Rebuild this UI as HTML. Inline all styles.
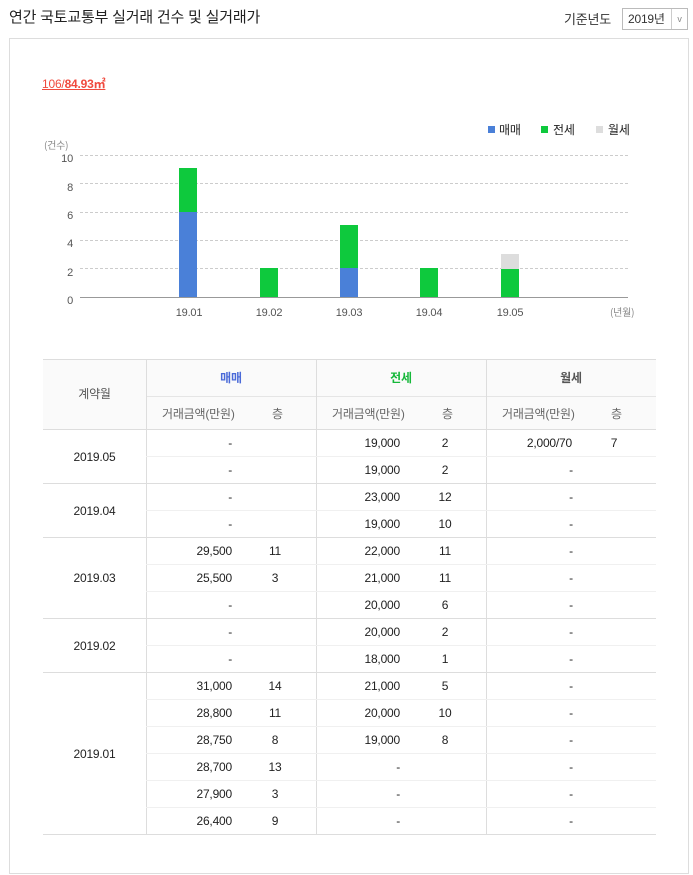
<!DOCTYPE html>
<html><head><meta charset="utf-8"><style>
*{margin:0;padding:0;box-sizing:border-box}
body{width:693px;height:875px;background:#fff;font-family:"Liberation Sans","Noto Sans CJK KR","NanumGothic",sans-serif;color:#222;position:relative;overflow:hidden;letter-spacing:-0.2px}
.a{position:absolute;white-space:nowrap}
.t{font-size:12px;line-height:27px;height:27px}
.r{text-align:right}
.c{text-align:center}
.hl{position:absolute;height:1px}
.vl{position:absolute;width:1px;background:#ddd}
</style></head><body>
<div class="a" style="left:9px;top:6px;font-size:15px;color:#222">연간 국토교통부 실거래 건수 및 실거래가</div>
<div class="a" style="left:564px;top:9px;font-size:13px;color:#333">기준년도</div>
<div class="a" style="left:622px;top:8px;width:66px;height:22px;border:1px solid #bbb;font-size:12px;line-height:20px;padding-left:5px;color:#333">2019년<span style="position:absolute;right:0;top:0;width:16px;height:20px;border-left:1px solid #ccc;text-align:center;font-size:9px;color:#888">v</span></div>
<div class="a" style="left:9px;top:38px;width:680px;height:836px;border:1px solid #ddd"></div>
<div class="a" style="left:42px;top:75px;font-size:12px;color:#f04a3e;text-decoration:underline">106/<b>84.93㎡</b></div>

<svg class="a" style="left:0;top:0" width="693" height="330">
<g stroke="#ccc" stroke-dasharray="3,2"><line x1="80" y1="155.5" x2="628" y2="155.5"/><line x1="80" y1="183.5" x2="628" y2="183.5"/><line x1="80" y1="212.5" x2="628" y2="212.5"/><line x1="80" y1="240.5" x2="628" y2="240.5"/><line x1="80" y1="268.5" x2="628" y2="268.5"/></g>
<line x1="80" y1="297.5" x2="628" y2="297.5" stroke="#999"/>
<g font-size="11" fill="#555" font-family="Liberation Sans,sans-serif" text-anchor="end">
<text x="73" y="162">10</text><text x="73" y="191">8</text><text x="73" y="219">6</text><text x="73" y="247">4</text><text x="73" y="276">2</text><text x="73" y="304">0</text></g>
<text x="44" y="149" font-size="10" fill="#888" font-family="Noto Sans CJK KR,sans-serif">(건수)</text>
<rect x="179" y="212" width="18" height="85" fill="#4a80d8"/><rect x="179" y="168" width="18" height="44" fill="#0ec93d"/>
<rect x="260" y="268" width="18" height="29" fill="#0ec93d"/>
<rect x="340" y="268" width="18" height="29" fill="#4a80d8"/><rect x="340" y="225" width="18" height="43" fill="#0ec93d"/>
<rect x="420" y="268" width="18" height="29" fill="#0ec93d"/>
<rect x="501" y="269" width="18" height="28" fill="#0ec93d"/><rect x="501" y="254" width="18" height="15" fill="#ddd"/>
<g font-size="11" fill="#555" font-family="Liberation Sans,sans-serif" text-anchor="middle">
<text x="189" y="316">19.01</text><text x="269" y="316">19.02</text><text x="349" y="316">19.03</text><text x="429" y="316">19.04</text><text x="510" y="316">19.05</text></g>
<text x="610" y="316" font-size="10" fill="#888" font-family="Noto Sans CJK KR,sans-serif">(년월)</text>
<rect x="488" y="126" width="7" height="7" fill="#4a80d8"/><text x="499" y="134" font-size="12" fill="#222" font-family="Noto Sans CJK KR,sans-serif">매매</text>
<rect x="541" y="126" width="7" height="7" fill="#0ec93d"/><text x="553" y="134" font-size="12" fill="#222" font-family="Noto Sans CJK KR,sans-serif">전세</text>
<rect x="596" y="126" width="7" height="7" fill="#ddd"/><text x="608" y="134" font-size="12" fill="#222" font-family="Noto Sans CJK KR,sans-serif">월세</text>
</svg>

<div class="a" style="left:43px;top:359px;width:613px;height:71px;background:#fafafa;border-top:1px solid #ddd"></div>
<div class="hl" style="left:146px;top:396px;width:510px;background:#e5e5e5"></div>
<div class="a c" style="left:43px;top:385px;width:103px;font-size:12px;color:#555">계약월</div>
<div class="a c" style="left:146px;top:369px;width:170px;font-size:12px;color:#4a6ad8;font-weight:bold">매매</div>
<div class="a c" style="left:316px;top:369px;width:170px;font-size:12px;color:#16b83a;font-weight:bold">전세</div>
<div class="a c" style="left:486px;top:369px;width:170px;font-size:12px;color:#555;font-weight:bold">월세</div>
<div class="a" style="left:162px;top:405px;font-size:12px;color:#666">거래금액(만원)</div><div class="a" style="left:272px;top:405px;font-size:12px;color:#666">층</div>
<div class="a" style="left:332px;top:405px;font-size:12px;color:#666">거래금액(만원)</div><div class="a" style="left:442px;top:405px;font-size:12px;color:#666">층</div>
<div class="a" style="left:502px;top:405px;font-size:12px;color:#666">거래금액(만원)</div><div class="a" style="left:611px;top:405px;font-size:12px;color:#666">층</div>
<div class="hl" style="left:43px;top:429px;width:613px;background:#ddd"></div>

<div class="vl" style="left:146px;top:360px;height:475px"></div>
<div class="vl" style="left:316px;top:360px;height:475px"></div>
<div class="vl" style="left:486px;top:360px;height:475px"></div>

<div id="rows"></div>
<script>
var g=[["2019.05",[["-","","19,000","2","2,000/70","7"],["-","","19,000","2","-",""]]],
["2019.04",[["-","","23,000","12","-",""],["-","","19,000","10","-",""]]],
["2019.03",[["29,500","11","22,000","11","-",""],["25,500","3","21,000","11","-",""],["-","","20,000","6","-",""]]],
["2019.02",[["-","","20,000","2","-",""],["-","","18,000","1","-",""]]],
["2019.01",[["31,000","14","21,000","5","-",""],["28,800","11","20,000","10","-",""],["28,750","8","19,000","8","-",""],["28,700","13","-","","-",""],["27,900","3","-","","-",""],["26,400","9","-","","-",""]]]];
var y=430,h="";
g.forEach(function(G){var n=G[1].length;
h+='<div class="a t c" style="left:43px;top:'+(y+(n*27-27)/2)+'px;width:103px">'+G[0]+'</div>';
G[1].forEach(function(r,i){
h+='<div class="a t r" style="left:146px;top:'+y+'px;width:86px">'+r[0]+'</div>';
h+='<div class="a t c" style="left:260px;top:'+y+'px;width:30px">'+r[1]+'</div>';
h+='<div class="a t r" style="left:316px;top:'+y+'px;width:84px">'+r[2]+'</div>';
h+='<div class="a t c" style="left:430px;top:'+y+'px;width:30px">'+r[3]+'</div>';
if(r[5])h+='<div class="a t r" style="left:486px;top:'+y+'px;width:86px">'+r[4]+'</div><div class="a t c" style="left:599px;top:'+y+'px;width:30px">'+r[5]+'</div>';
else h+='<div class="a t c" style="left:486px;top:'+y+'px;width:170px">'+r[4]+'</div>';
y+=27;
if(i<n-1)h+='<div class="hl" style="left:146px;top:'+(y-1)+'px;width:510px;background:#f0f0f0"></div>';
});
h+='<div class="hl" style="left:43px;top:'+(y-1)+'px;width:613px;background:#ddd"></div>';
});
document.getElementById('rows').innerHTML=h;
</script>
</body></html>
